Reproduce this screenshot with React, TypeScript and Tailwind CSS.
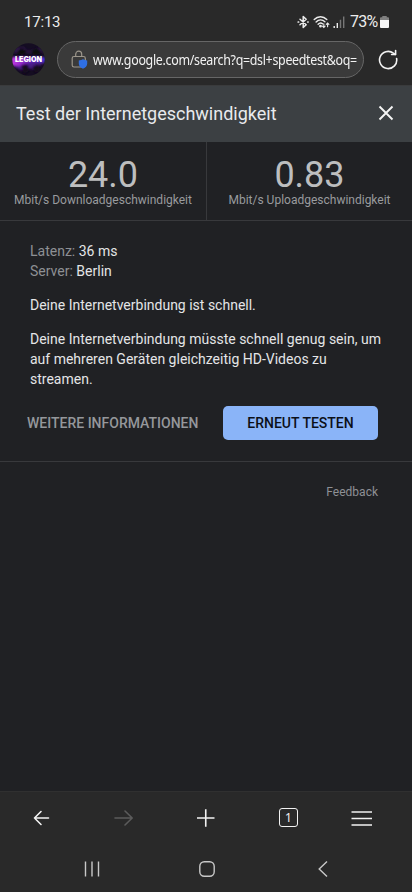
const stats = [
  { value: '24.0', label: 'Mbit/s Downloadgeschwindigkeit' },
  { value: '0.83', label: 'Mbit/s Uploadgeschwindigkeit' },
];

function StatusBar() {
  return (
    <div className="flex h-[41px] items-center pt-[3px] pl-[24px] pr-[23px] text-[#ececec]">
      <span className="text-[15px] leading-5 tracking-[-0.2px]">17:13</span>
      <div className="ml-auto flex items-center">
        {/* Bluetooth */}
        <svg className="h-[14px] w-[12px]" viewBox="0 0 12 14" fill="none" stroke="currentColor" strokeWidth="1.5" strokeLinejoin="round" strokeLinecap="round">
          <path d="M3 4.300 9.200 9.700 6.200 12.400V1.600L9.200 4.300 3 9.700" />
          <path d="M1.200 7h.4M10.800 7h.4" strokeWidth="1.700" />
        </svg>
        {/* Wifi */}
        <svg className="ml-[4px] h-[14px] w-[17px]" viewBox="0 0 17 14" fill="none" stroke="currentColor" strokeWidth="1.4" strokeLinecap="round">
          <path d="M1.200 4.600C4.800.8 10.200.8 13.800 4.600M3.100 7c2.600-2.700 6.200-2.700 8.800-.3M5.100 9.200c1.400-1.400 3.200-1.500 4.400-.5" />
          <path d="M10.800 8.800v3.600m-1.300-1.200 1.300 1.300 1.300-1.300M14.600 11.800V8m-1.300 1.300L14.600 8l1.300 1.300" strokeWidth="1.1" />
          <circle cx="7.500" cy="11.200" r="0.7" fill="currentColor" />
        </svg>
        {/* Signal */}
        <svg className="ml-[3px] h-[12px] w-[12px]" viewBox="0 0 12 12" fill="currentColor">
          <path d="M.5 10h1.400v2H.5zM3.600 7H5v5H3.600z" />
          <path d="M6.800 3.700h1.400V12H6.800zM10 .6h1.400V12H10z" fill="#777" />
        </svg>
        <span className="ml-[5px] w-[29px] whitespace-nowrap text-[16px] leading-5 tracking-[-0.8px]">73%</span>
        {/* Battery */}
        <svg className="ml-[1px] h-[12px] w-[9px]" viewBox="0 0 9 12">
          <path d="M2.300 0h4.400v1.300H8a1 1 0 0 1 1 1V5H0V2.300a1 1 0 0 1 1-1h1.300z" fill="#808080" />
          <path d="M0 4h9v7a1 1 0 0 1-1 1H1a1 1 0 0 1-1-1z" fill="#f5f5f5" />
        </svg>
      </div>
    </div>
  );
}

function Avatar() {
  return (
    <svg className="h-[33px] w-[33px] shrink-0" viewBox="0 0 33 33">
      <defs>
        <clipPath id="avatar">
          <circle cx="16.500" cy="16.500" r="16.200" />
        </clipPath>
        <linearGradient id="glow" x1="0" x2="1" y1="0" y2="0">
          <stop offset="0" stopColor="#d03bea" />
          <stop offset="0.5" stopColor="#6a1fb4" />
          <stop offset="1" stopColor="#3d35d8" />
        </linearGradient>
        <filter id="soft" x="-20%" y="-50%" width="140%" height="200%">
          <feGaussianBlur stdDeviation="1.300" />
        </filter>
      </defs>
      <g clipPath="url(#avatar)">
        <path d="M0 0h33v33H0z" fill="#150d22" />
        <g filter="url(#soft)">
          <path d="M0 4h12l4 4 12-4 5 6H0z" fill="#2c1742" />
          <path d="M-2 14h37v5l-7 3-5 5-9-3-5 3-11-5z" fill="#4a1a86" />
          <path d="M-2 14h37v5H22l-8 2-6 2-10-1z" fill="url(#glow)" />
          <path d="M9 22l6-1 3 6-6 5zM20 24l6-3 3 6-5 4z" fill="#12081d" />
          <path d="M9 5l6 3-4 4-7-1zM19 8l6-3 5 5-8 3z" fill="#0a0910" />
        </g>
      </g>
      <text x="16.500" y="19.300" textAnchor="middle" textLength="27" lengthAdjust="spacingAndGlyphs" fill="#fff" fontSize="7.4" fontWeight="900" fontFamily="Inter, sans-serif">
        LEGION
      </text>
    </svg>
  );
}

function AddressBar() {
  return (
    <div className="flex h-[45px] items-start border-b border-[#3a3b3c] pl-3">
      <div className="pt-[2px]">
        <Avatar />
      </div>
      <div className="ml-[12px] flex h-[37px] w-[307px] shrink-0 items-center rounded-full border border-[#666] bg-[#3a3a3a] pl-[13px]">
        <svg className="h-[19px] w-[17px] shrink-0" viewBox="0 0 17 19" fill="none">
          <path d="M4.700 6.500V4.200a3 3 0 0 1 6 0v2.300M3 6.500h9.500a1.800 1.800 0 0 1 1.800 1.800v6.900a1.800 1.800 0 0 1-1.800 1.800H3a1.800 1.800 0 0 1-1.800-1.800V8.300A1.800 1.800 0 0 1 3 6.500z" stroke="#9c968b" strokeWidth="1.2" />
          <path d="M12 9c1.300 1 2.500 1.300 4.200 1.400v3.300c0 2.300-1.700 3.900-4.200 5-2.500-1.100-4.200-2.700-4.200-5v-3.300c1.700-.1 2.900-.4 4.200-1.400z" fill="#2f6fe4" />
        </svg>
        <span className="ml-[5px] w-[263px] origin-left scale-x-[0.887] whitespace-nowrap font-['Noto_Sans',sans-serif] text-[14px] tracking-[-0.35px] text-[#f2f2f2]">
          www.google.com/search?q=dsl+speedtest&amp;oq=
        </span>
      </div>
      {/* Reload */}
      <svg className="ml-[14px] mt-[8px] h-[21px] w-[21px] shrink-0" viewBox="0 0 21 21" fill="none" stroke="#f2f2f2" strokeWidth="1.600" strokeLinecap="round" strokeLinejoin="round">
        <path d="M18.600 9.500A8.600 8.600 0 1 1 15.400 4.200L17.300 5.500" />
        <path d="M17.600 1.500v4h-4" />
      </svg>
    </div>
  );
}

function BottomBar() {
  return (
    <div className="border-t border-[#303030] bg-[#292929]">
      <div className="flex h-[53px] items-center pb-[2px] pl-[31px] text-[#f2f2f2]">
        <svg className="h-5 w-5" viewBox="0 0 20 20" fill="none" stroke="currentColor" strokeWidth="1.600" strokeLinecap="round" strokeLinejoin="round">
          <path d="M17.500 10H3.500M10 3.500 3.500 10l6.500 6.500" />
        </svg>
        <svg className="ml-[63px] h-5 w-5 text-[#5b5b5b]" viewBox="0 0 20 20" fill="none" stroke="currentColor" strokeWidth="1.600" strokeLinecap="round" strokeLinejoin="round">
          <path d="M1 10h17M11 3l7.200 7-7.200 7" />
        </svg>
        <svg className="ml-[62px] h-5 w-5" viewBox="0 0 20 20" fill="none" stroke="currentColor" strokeWidth="1.600">
          <path d="M1 10h17.500M9.750 1.250v17.500" />
        </svg>
        <div className="ml-[63px] flex h-[19px] w-[19px] items-center justify-center rounded-[3px] border-[1.5px] border-[#f2f2f2] font-['Noto_Sans',sans-serif] text-[12px] leading-none">
          1
        </div>
        <svg className="ml-[53px] h-5 w-[22px]" viewBox="0 0 22 20" fill="none" stroke="currentColor" strokeWidth="1.700">
          <path d="M.5 4h20.500M.5 10.500h20.500M.5 17h20.500" />
        </svg>
      </div>
      {/* System navigation */}
      <div className="flex h-[47px] items-center pl-[84px] text-[#c8c8c8]">
        <svg className="h-4 w-4" viewBox="0 0 16 16" stroke="currentColor" strokeWidth="1.4">
          <path d="M1.500 .5v15M8 .5v15M14.500 .5v15" />
        </svg>
        <svg className="ml-[99px] h-4 w-4" viewBox="0 0 16 16" fill="none" stroke="currentColor" strokeWidth="1.4">
          <rect x="0.800" y="0.800" width="14.400" height="14.400" rx="4.500" />
        </svg>
        <svg className="ml-[103px] h-4 w-[10px]" viewBox="0 0 10 16" fill="none" stroke="currentColor" strokeWidth="1.4">
          <path d="M9 .5 1.200 8 9 15.500" />
        </svg>
      </div>
    </div>
  );
}

export default function App() {
  return (
    <div className="flex h-[892px] w-[412px] flex-col overflow-hidden bg-[#202124] font-[Roboto,sans-serif]">
      <div className="bg-[#292929]">
        <StatusBar />
        <AddressBar />
      </div>

      <header className="flex h-[56px] items-center justify-between bg-[#3c4043] pl-4 pr-[18px]">
        <h1 className="whitespace-nowrap text-[18px] leading-6 text-[#e8eaed]">Test der Internetgeschwindigkeit</h1>
        <svg className="-mt-[2px] h-4 w-4" viewBox="0 0 16 16" stroke="#f5f5f5" strokeWidth="1.900">
          <path d="M1.500 1.500l13 13M14.500 1.500l-13 13" />
        </svg>
      </header>

      <section className="flex h-[79px] divide-x divide-[#38393c] border-b border-[#38393c]">
        {stats.map((stat) => (
          <div key={stat.label} className="flex w-[207px] shrink-0 flex-col items-center pt-[15px] text-center last:w-[205px]">
            <span className="text-[36px] leading-[36px] text-[#bdbebf]">{stat.value}</span>
            <span className="whitespace-nowrap text-[12px] leading-[14px] text-[#999b9e]">{stat.label}</span>
          </div>
        ))}
      </section>

      <section className="border-b border-[#38393c] text-[14px] leading-5 text-[#e4e5e7]">
        <div className="pl-[30px] pt-[20px]">
          <p><span className="text-[#8e9094]">Latenz:</span> 36 ms</p>
          <p><span className="text-[#8e9094]">Server:</span> Berlin</p>
          <p className="mt-[14px]">Deine Internetverbindung ist schnell.</p>
          <p className="mt-[14px] whitespace-nowrap">
            Deine Internetverbindung müsste schnell genug sein, um
            <br />
            auf mehreren Geräten gleichzeitig HD-Videos zu
            <br />
            streamen.
          </p>
        </div>
        <div className="mt-[17px] flex h-[55px] items-start justify-between pl-[27px] pr-[34px] font-medium">
          <button className="h-[34px] whitespace-nowrap text-[#95979b]">WEITERE INFORMATIONEN</button>
          <button className="h-[34px] w-[155px] rounded-[5px] bg-[#8ab4f8] text-[#0c1018]">ERNEUT TESTEN</button>
        </div>
      </section>

      <div className="flex flex-1 justify-end pr-[34px] pt-[22px] text-[12px] leading-4 text-[#8e9094]">Feedback</div>

      <BottomBar />
    </div>
  );
}
